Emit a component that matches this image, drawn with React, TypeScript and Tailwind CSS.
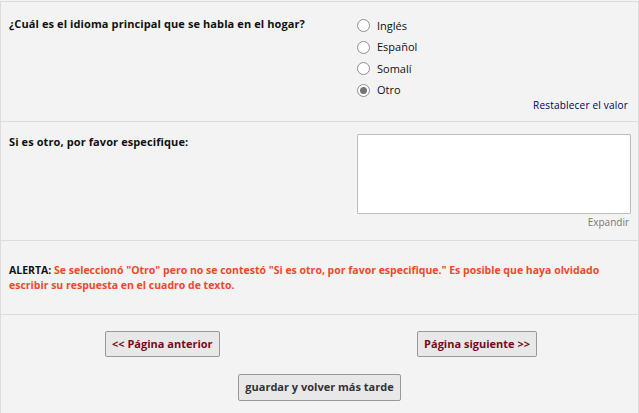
import React from "react";

const Radio = ({ label, checked }: { label: string; checked?: boolean }) => (
  <label className="flex items-center h-[21.5px] gap-[7px]">
    <span className="w-[13px] h-[13px] rounded-full border border-[#8f8f8f] bg-white flex items-center justify-center">
      {checked && <span className="w-[7px] h-[7px] rounded-full bg-[#767676]" />}
    </span>
    <span className="text-[11px] text-[#111]">{label}</span>
  </label>
);

export default function App() {
  return (
    <div
      className="w-[639px] h-[413px] bg-[#f3f3f3] overflow-hidden"
      style={{ fontFamily: '"Open Sans", sans-serif' }}
    >
      <div className="mt-[1px] border-t border-l border-r border-[#dcdcdc]">
        {/* Row 1 */}
        <div className="flex h-[120px] border-b border-[#dcdcdc]">
          <div className="w-[356px] pl-[8px] pt-[14px] text-[11px] font-bold text-[#111] tracking-[0.1px]">
            ¿Cuál es el idioma principal que se habla en el hogar?
          </div>
          <div className="flex-1 pt-[13px] pr-[10px]">
            <div>
              <Radio label="Inglés" />
              <Radio label="Español" />
              <Radio label="Somalí" />
              <Radio label="Otro" checked />
            </div>
            <div className="text-right text-[10px] text-[#000050] tracking-[0.2px] -mt-[3px]">
              Restablecer el valor
            </div>
          </div>
        </div>
        {/* Row 2 */}
        <div className="flex h-[119px] border-b border-[#dcdcdc]">
          <div className="w-[356px] pl-[8px] pt-[12px] text-[11px] font-bold text-[#111] tracking-[0.1px]">
            Si es otro, por favor especifique:
          </div>
          <div className="flex-1 pt-[12px] pr-[7px]">
            <div className="h-[80px] bg-white border border-[#bdbdbd] rounded-[1px]" />
            <div className="text-right text-[10px] text-[#777] mt-[1px] pr-[2px]">Expandir</div>
          </div>
        </div>
        {/* Row 3 */}
        <div className="h-[74px] border-b border-[#dcdcdc] pl-[8px] pt-[22px] pr-[8px]">
          <p className="text-[10.5px] font-bold leading-[15px] text-[#f0482c]">
            <span className="text-[#111]">ALERTA:</span> Se seleccionó "Otro" pero no se contestó "Si es otro, por favor especifique." Es posible que haya olvidado escribir su respuesta en el cuadro de texto.
          </p>
        </div>
        {/* Row 4 */}
        <div className="h-[100px] pt-[16px]">
          <div className="flex justify-between pl-[104px] pr-[101px]">
            <button className="h-[26px] px-[6px] bg-[#e8e8e8] border border-[#999] rounded-[2px] text-[11px] font-bold text-[#7a0a1a]">
              &lt;&lt; Página anterior
            </button>
            <button className="h-[26px] px-[6px] bg-[#e8e8e8] border border-[#999] rounded-[2px] text-[11px] font-bold text-[#7a0a1a]">
              Página siguiente &gt;&gt;
            </button>
          </div>
          <div className="flex justify-center mt-[17px]">
            <button className="h-[27px] px-[6px] bg-[#e8e8e8] border border-[#999] rounded-[2px] text-[11px] font-bold text-[#333]">
              guardar y volver más tarde
            </button>
          </div>
        </div>
      </div>
    </div>
  );
}
